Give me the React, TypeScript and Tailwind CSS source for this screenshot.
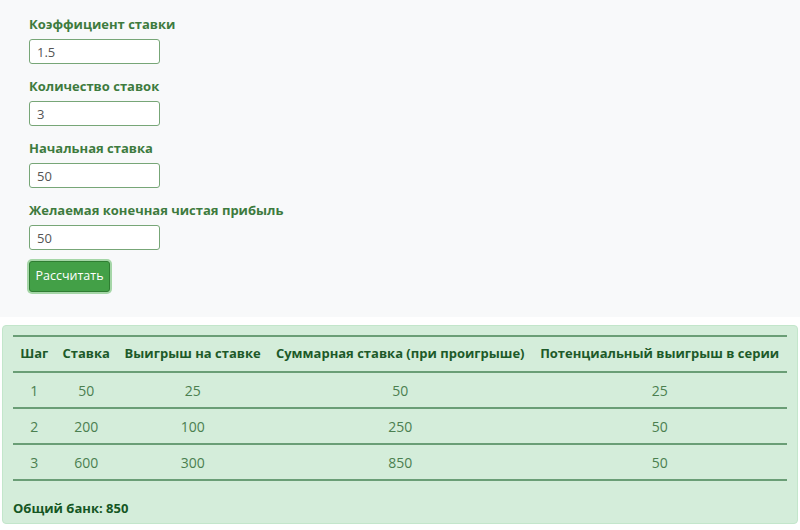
const fields = [
  { label: "Коэффициент ставки", value: "1.5" },
  { label: "Количество ставок", value: "3" },
  { label: "Начальная ставка", value: "50" },
  { label: "Желаемая конечная чистая прибыль", value: "50" },
];

const rows = [
  { step: 1, bet: 50, win: 25, total: 50, potential: 25 },
  { step: 2, bet: 200, win: 100, total: 250, potential: 50 },
  { step: 3, bet: 600, win: 300, total: 850, potential: 50 },
];

const headers = [
  "Шаг",
  "Ставка",
  "Выигрыш на ставке",
  "Суммарная ставка (при проигрыше)",
  "Потенциальный выигрыш в серии",
];

export default function App() {
  return (
    <div
      className="min-h-screen bg-white"
      style={{ fontFamily: '"Open Sans", "Noto Sans", sans-serif' }}
    >
      <div className="h-[317px] bg-[#f8f9fa] px-[29px] pt-[14px]">
        {fields.map((f) => (
          <div key={f.label} className="mb-[12px]">
            <label className="block h-[20px] text-[13px] font-bold leading-[20px] text-[#3e7b3e]">
              {f.label}
            </label>
            <input
              readOnly
              value={f.value}
              className="mt-[5px] block h-[25px] w-[131px] rounded-[3px] border border-[#77a677] bg-white px-[7px] text-[13px] text-[#555] outline-none"
            />
          </div>
        ))}
        <button className="-mt-[2px] h-[31px] w-[81px] rounded-[3px] border border-[#2f7d32] bg-[#43a047] text-[12.5px] text-white shadow-[0_0_0_2px_#a5d6a7]">
          Рассчитать
        </button>
      </div>

      <div className="mx-[2px] mt-[8px] h-[199px] rounded-[4px] border border-[#c3e6cb] bg-[#d4edda] px-[10px] pt-[9px]">
        <table className="w-full border-collapse text-center">
          <thead>
            <tr className="h-[36px] border-y-2 border-[#6a9e76]">
              {headers.map((h) => (
                <th
                  key={h}
                  className="whitespace-nowrap px-[7px] text-[13px] font-bold text-[#1d5a29]"
                >
                  {h}
                </th>
              ))}
            </tr>
          </thead>
          <tbody>
            {rows.map((r) => (
              <tr key={r.step} className="h-[36px] border-b-2 border-[#6a9e76] text-[14px] text-[#4b7f50]">
                <td className="px-[7px]">{r.step}</td>
                <td className="px-[7px]">{r.bet}</td>
                <td className="px-[7px]">{r.win}</td>
                <td className="px-[7px]">{r.total}</td>
                <td className="px-[7px]">{r.potential}</td>
              </tr>
            ))}
          </tbody>
        </table>
        <p className="mt-[18px] text-[13px] font-bold text-[#155724]">Общий банк: 850</p>
      </div>
    </div>
  );
}
